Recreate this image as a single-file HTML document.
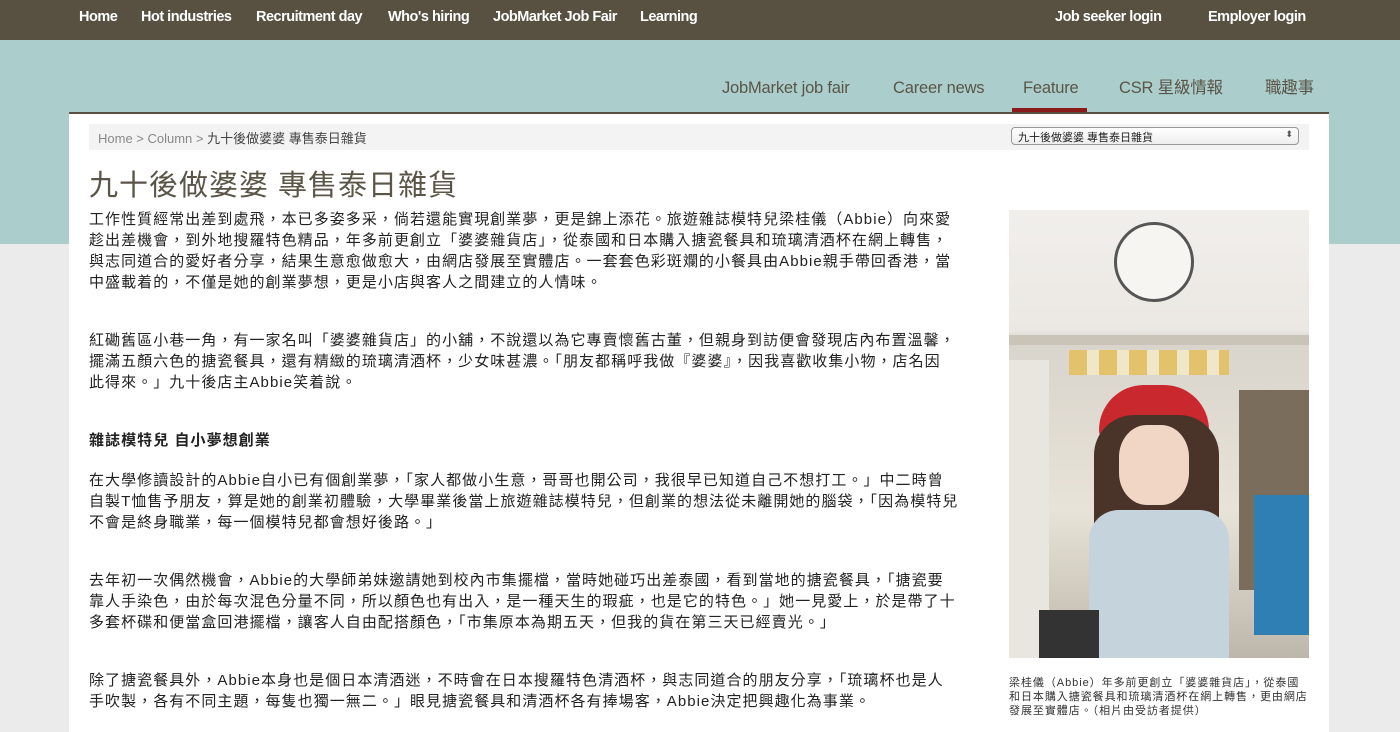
<!DOCTYPE html>
<html><head><meta charset="utf-8"><style>
*{margin:0;padding:0;box-sizing:border-box}
html,body{width:1400px;height:732px;overflow:hidden}
body{background:#ebebeb;font-family:"Liberation Sans","Noto Sans CJK TC",sans-serif;position:relative}
.top{position:absolute;left:0;top:0;width:1400px;height:40px;background:#585142}
.top a{position:absolute;top:9px;color:#fff;font-size:14.5px;font-weight:bold;letter-spacing:-0.5px;white-space:nowrap}
.teal{position:absolute;left:0;top:40px;width:1400px;height:204px;background:#abcecd}
.sub a{position:absolute;top:78px;color:#5a5547;font-size:16.5px;letter-spacing:-0.2px;white-space:nowrap;line-height:20px}
.ul{position:absolute;left:1012px;top:108px;width:75px;height:4px;background:#8b1a1a}
.panel{position:absolute;left:69px;top:112px;width:1260px;height:620px;background:#fff;border-top:2px solid #585142}
.bc{position:absolute;left:89px;top:124px;width:1220px;height:26px;background:#f3f3f3;font-size:13px;color:#888;padding:4px 9px}
.bc b{font-weight:normal;color:#444}
.sel{position:absolute;left:1011px;top:127px;width:288px;height:18px;border:1px solid #999;border-radius:4px;background:linear-gradient(#fff,#eee);font-size:11px;color:#222;padding:1px 6px}
.sel:after{content:"⬍";position:absolute;right:5px;top:1px;font-size:9px;color:#555}
h1{position:absolute;left:89px;top:162px;font-size:29px;font-weight:normal;color:#5a5547;letter-spacing:1px}
.txt{position:absolute;left:89px;top:209px;width:900px;font-size:15px;line-height:21px;color:#222;white-space:nowrap;letter-spacing:1.05px}
.txt p{margin-bottom:37px}
.txt h4{font-size:15px;margin-bottom:19px}
.photo{position:absolute;left:1009px;top:210px;width:300px;height:448px;background:linear-gradient(#f1efec 0,#ebe8e3 120px,#d9d4cc 130px,#e8e3d8 300px,#bdb7ab 448px);overflow:hidden}
.cap{position:absolute;left:1009px;top:676px;width:320px;font-size:11px;line-height:14px;color:#333;white-space:nowrap;letter-spacing:0.95px}
</style></head><body>
<div class="top">
<a style="left:79px">Home</a><a style="left:141px">Hot industries</a><a style="left:256px">Recruitment day</a><a style="left:388px">Who's hiring</a><a style="left:493px">JobMarket Job Fair</a><a style="left:640px">Learning</a>
<a style="left:1055px">Job seeker login</a><a style="left:1208px">Employer login</a>
</div>
<div class="teal"></div>
<div class="sub"><a style="left:722px">JobMarket job fair</a><a style="left:893px">Career news</a><a style="left:1023px">Feature</a><a style="left:1119px">CSR 星級情報</a><a style="left:1265px">職趣事</a></div>
<div class="ul"></div>
<div class="panel"></div>
<div class="bc">Home &gt; Column &gt; <b>九十後做婆婆 專售泰日雜貨</b></div>
<div class="sel">九十後做婆婆 專售泰日雜貨</div>
<h1>九十後做婆婆 專售泰日雜貨</h1>
<div class="txt">
<p>工作性質經常出差到處飛，本已多姿多采，倘若還能實現創業夢，更是錦上添花。旅遊雜誌模特兒梁桂儀（Abbie）向來愛<br>趁出差機會，到外地搜羅特色精品，年多前更創立「婆婆雜貨店」，從泰國和日本購入搪瓷餐具和琉璃清酒杯在網上轉售，<br>與志同道合的愛好者分享，結果生意愈做愈大，由網店發展至實體店。一套套色彩斑斕的小餐具由Abbie親手帶回香港，當<br>中盛載着的，不僅是她的創業夢想，更是小店與客人之間建立的人情味。</p>
<p>紅磡舊區小巷一角，有一家名叫「婆婆雜貨店」的小舖，不說還以為它專賣懷舊古董，但親身到訪便會發現店內布置溫馨，<br>擺滿五顏六色的搪瓷餐具，還有精緻的琉璃清酒杯，少女味甚濃。「朋友都稱呼我做『婆婆』，因我喜歡收集小物，店名因<br>此得來。」九十後店主Abbie笑着說。</p>
<h4>雜誌模特兒 自小夢想創業</h4>
<p>在大學修讀設計的Abbie自小已有個創業夢，「家人都做小生意，哥哥也開公司，我很早已知道自己不想打工。」中二時曾<br>自製T恤售予朋友，算是她的創業初體驗，大學畢業後當上旅遊雜誌模特兒，但創業的想法從未離開她的腦袋，「因為模特兒<br>不會是終身職業，每一個模特兒都會想好後路。」</p>
<p>去年初一次偶然機會，Abbie的大學師弟妹邀請她到校內市集擺檔，當時她碰巧出差泰國，看到當地的搪瓷餐具，「搪瓷要<br>靠人手染色，由於每次混色分量不同，所以顏色也有出入，是一種天生的瑕疵，也是它的特色。」她一見愛上，於是帶了十<br>多套杯碟和便當盒回港擺檔，讓客人自由配搭顏色，「市集原本為期五天，但我的貨在第三天已經賣光。」</p>
<p>除了搪瓷餐具外，Abbie本身也是個日本清酒迷，不時會在日本搜羅特色清酒杯，與志同道合的朋友分享，「琉璃杯也是人<br>手吹製，各有不同主題，每隻也獨一無二。」眼見搪瓷餐具和清酒杯各有捧場客，Abbie決定把興趣化為事業。</p>
</div>
<div class="photo">
<div style="position:absolute;left:105px;top:12px;width:80px;height:80px;border-radius:50%;border:3px solid #555;background:#f6f5f2"></div>
<div style="position:absolute;left:0;top:125px;width:300px;height:10px;background:#c9c3b8"></div>
<div style="position:absolute;left:60px;top:140px;width:160px;height:25px;background:repeating-linear-gradient(90deg,#e2c26a 0 18px,#f0e6c8 18px 30px)"></div>
<div style="position:absolute;left:0;top:150px;width:40px;height:300px;background:#e9e6df"></div>
<div style="position:absolute;left:230px;top:180px;width:70px;height:200px;background:#7a6d5c"></div>
<div style="position:absolute;left:90px;top:175px;width:110px;height:60px;border-radius:60px 60px 20px 20px;background:#c9282f"></div>
<div style="position:absolute;left:85px;top:205px;width:125px;height:170px;border-radius:40px;background:#4a342a"></div>
<div style="position:absolute;left:110px;top:215px;width:70px;height:80px;border-radius:40%;background:#f2d6c5"></div>
<div style="position:absolute;left:80px;top:300px;width:140px;height:148px;border-radius:30px 30px 0 0;background:#c4d3dc"></div>
<div style="position:absolute;left:245px;top:285px;width:55px;height:140px;background:#2f7fb5"></div>
<div style="position:absolute;left:30px;top:400px;width:60px;height:48px;background:#333"></div>
</div>
<div class="cap">梁桂儀（Abbie）年多前更創立「婆婆雜貨店」，從泰國<br>和日本購入搪瓷餐具和琉璃清酒杯在網上轉售，更由網店<br>發展至實體店。（相片由受訪者提供）</div>
</body></html>
